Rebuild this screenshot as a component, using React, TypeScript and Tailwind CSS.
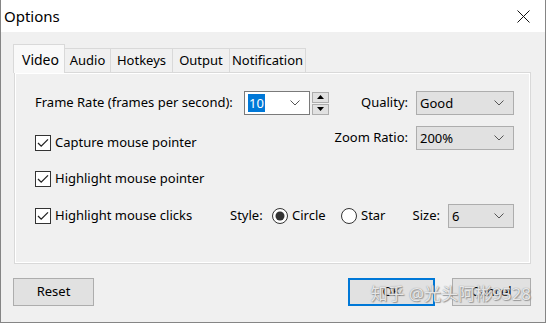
import React from "react";

const font = "font-['Segoe_UI','Noto_Sans','Noto_Sans_CJK_SC',sans-serif]";

function Chevron() {
  return (
    <svg width="10" height="6" viewBox="0 0 10 6" className="shrink-0">
      <polyline points="0.5,0.5 5,5 9.5,0.5" fill="none" stroke="#555" strokeWidth="1" />
    </svg>
  );
}

function Combo({ value, width, white = false, selected = false }: { value: string; width: string; white?: boolean; selected?: boolean }) {
  return (
    <div
      className={`${width} h-[24px] flex items-center justify-between pl-[3px] pr-[9px] border ${
        white ? "bg-white border-[#7a7a7a]" : "bg-[#e1e1e1] border-[#adadad]"
      }`}
    >
      {selected ? (
        <span className="bg-[#0078d7] text-white px-[1px] leading-[18px]">{value}</span>
      ) : (
        <span className="leading-[18px]">{value}</span>
      )}
      <Chevron />
    </div>
  );
}

function Checkbox({ label }: { label: string }) {
  return (
    <div className="flex items-center gap-[4px] whitespace-nowrap">
      <svg width="16" height="16" viewBox="0 0 16 16" className="shrink-0">
        <rect x="0.5" y="0.5" width="15" height="15" fill="#fff" stroke="#333" />
        <polyline points="3,8 6.2,11.2 13,4.4" fill="none" stroke="#222" strokeWidth="1.3" />
      </svg>
      <span>{label}</span>
    </div>
  );
}

function Radio({ label, checked }: { label: string; checked?: boolean }) {
  return (
    <div className="flex items-center gap-[4px]">
      <svg width="16" height="16" viewBox="0 0 16 16" className="shrink-0">
        <circle cx="8" cy="8" r="7.5" fill="#fff" stroke="#333" />
        {checked && <circle cx="8" cy="8" r="4.5" fill="#333" />}
      </svg>
      <span>{label}</span>
    </div>
  );
}

const tabs = [
  { name: "Audio", w: "w-[46px]" },
  { name: "Hotkeys", w: "w-[62px]" },
  { name: "Output", w: "w-[57px]" },
  { name: "Notification", w: "w-[76px]" },
];

export default function App() {
  return (
    <div className={`w-[546px] h-[323px] bg-[#f0f0f0] border-x border-b border-[#858585] flex flex-col text-[13px] text-black ${font}`}>
      {/* title bar */}
      <div className="h-[32px] bg-white flex items-center justify-between pl-[3px] pr-[15px] shrink-0">
        <span className="text-[15px] leading-none mt-[1px]">Options</span>
        <svg width="13" height="13" viewBox="0 0 13 13">
          <path d="M0.5,0.5 L12.5,12.5 M12.5,0.5 L0.5,12.5" stroke="#111" strokeWidth="1" />
        </svg>
      </div>

      <div className="flex flex-col pl-[12px] pr-[14px] pt-[12px]">
        {/* tabs */}
        <div className="flex items-end h-[28px] relative z-10">
          <div className="h-[29px] w-[52px] bg-[#f9f9f9] border border-b-0 border-[#d9d9d9] flex items-center pl-[8px] -mb-px text-[14px]">
            Video
          </div>
          {tabs.map((t) => (
            <div
              key={t.name}
              className={`${t.w} h-[24px] bg-[#f0f0f0] border border-l-0 border-b-0 border-[#d9d9d9] flex items-center justify-center`}
            >
              {t.name}
            </div>
          ))}
        </div>

        {/* panel */}
        <div className="ml-[1px] h-[192px] bg-[#f0f0f0] border border-[#d9d9d9] shadow-[inset_1px_1px_0_#fff,inset_-1px_-1px_0_#fff] flex flex-col pt-[18px] pl-[20px] pr-[16px] whitespace-nowrap">
          <div className="flex items-center h-[24px]">
            <span className="w-[209px] shrink-0">Frame Rate (frames per second):</span>
            <Combo value="10" width="w-[66px]" white selected />
            <div className="ml-[2px] flex flex-col gap-[1px]">
              <div className="w-[17px] h-[11px] bg-[#e1e1e1] border border-[#adadad] flex items-center justify-center">
                <svg width="7" height="4" viewBox="0 0 7 4"><polygon points="0,4 3.5,0 7,4" fill="#000" /></svg>
              </div>
              <div className="w-[17px] h-[11px] bg-[#e1e1e1] border border-[#adadad] flex items-center justify-center">
                <svg width="7" height="4" viewBox="0 0 7 4"><polygon points="0,0 3.5,4 7,0" fill="#000" /></svg>
              </div>
            </div>
            <div className="ml-auto flex items-center gap-[8px]">
              <span>Quality:</span>
              <Combo value="Good" width="w-[98px]" />
            </div>
          </div>

          <div className="flex items-start h-[24px] mt-[11px]">
            <div className="mt-[7px]">
              <Checkbox label="Capture mouse pointer" />
            </div>
            <div className="ml-auto flex items-center gap-[8px]">
              <span>Zoom Ratio:</span>
              <Combo value="200%" width="w-[98px]" />
            </div>
          </div>

          <div className="flex items-center h-[24px] mt-[17px]">
            <Checkbox label="Highlight mouse pointer" />
          </div>

          <div className="flex items-center h-[24px] mt-[13px]">
            <div className="w-[195px] shrink-0">
              <Checkbox label="Highlight mouse clicks" />
            </div>
            <span className="w-[42px] shrink-0">Style:</span>
            <div className="w-[69px] shrink-0">
              <Radio label="Circle" checked />
            </div>
            <Radio label="Star" />
            <div className="ml-auto flex items-center gap-[8px]">
              <span>Size:</span>
              <Combo value="6" width="w-[66px]" />
            </div>
          </div>
        </div>

        {/* buttons */}
        <div className="flex items-center mt-[14px] relative">
          <div className="w-[81px] h-[28px] bg-[#e1e1e1] border border-[#adadad] flex items-center justify-center">
            Reset
          </div>
          <div className="ml-auto w-[87px] h-[28px] bg-[#e1e1e1] border-2 border-[#0078d7] flex items-center justify-center">
            OK
          </div>
          <div className="ml-[17px] w-[79px] h-[28px] bg-[#e1e1e1] border border-[#adadad] flex items-center justify-center">
            Cancel
          </div>
          {/* watermark over the buttons */}
          <span className="absolute right-[0px] top-[5px] text-[17px] leading-[22px] text-white/80 font-['Noto_Sans','Noto_Sans_CJK_SC',sans-serif] [text-shadow:0_0_1px_#777,1px_1px_1px_#999] whitespace-nowrap">
            知乎 @光头阿彬9528
          </span>
        </div>
      </div>
    </div>
  );
}
